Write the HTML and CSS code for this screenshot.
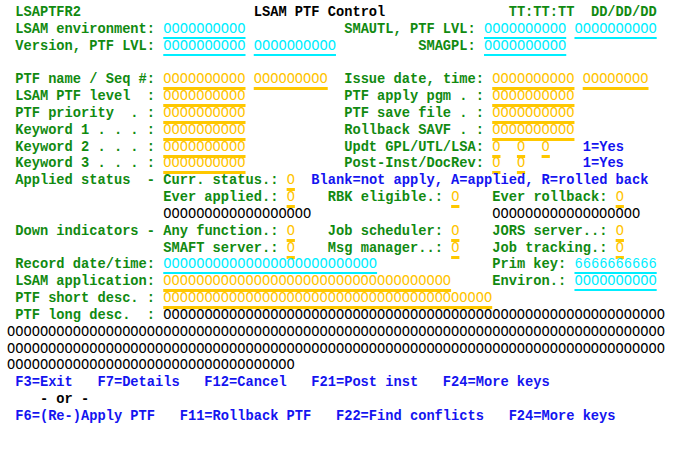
FILE: index.html
```html
<!DOCTYPE html>
<html>
<head>
<meta charset="utf-8">
<link rel="stylesheet" href="styles.css">
</head>
<body>
<div class="screen">
<div class="r"> <span class="g">LSAPTFR2</span>                     <span class="k">LSAM PTF Control</span>               <span class="g">TT:TT:TT</span>  <span class="g">DD/DD/DD</span></div>
<div class="r"> <span class="g">LSAM environment:</span> <span class="c">OOOOOOOOOO</span>            <span class="g">SMAUTL, PTF LVL:</span> <span class="c">OOOOOOOOOO</span> <span class="c">OOOOOOOOOO</span></div>
<div class="r"> <span class="g">Version, PTF LVL:</span> <span class="c">OOOOOOOOOO</span> <span class="c">OOOOOOOOOO</span>          <span class="g">SMAGPL:</span> <span class="c">OOOOOOOOOO</span></div>
<div class="r"> </div>
<div class="r"> <span class="g">PTF name / Seq #:</span> <span class="y">OOOOOOOOOO</span> <span class="y">OOOOOOOOO</span>  <span class="g">Issue date, time:</span> <span class="y">OOOOOOOOOO</span> <span class="y">OOOOOOOO</span></div>
<div class="r"> <span class="g">LSAM PTF level  :</span> <span class="y">OOOOOOOOOO</span>            <span class="g">PTF apply pgm . :</span> <span class="y">OOOOOOOOOO</span></div>
<div class="r"> <span class="g">PTF priority  . :</span> <span class="y">OOOOOOOOOO</span>            <span class="g">PTF save file . :</span> <span class="y">OOOOOOOOOO</span></div>
<div class="r"> <span class="g">Keyword 1 . . . :</span> <span class="y">OOOOOOOOOO</span>            <span class="g">Rollback SAVF . :</span> <span class="y">OOOOOOOOOO</span></div>
<div class="r"> <span class="g">Keyword 2 . . . :</span> <span class="y">OOOOOOOOOO</span>            <span class="g">Updt GPL/UTL/LSA:</span> <span class="y">O</span>  <span class="y">O</span>  <span class="y">O</span>    <span class="b">1=Yes</span></div>
<div class="r"> <span class="g">Keyword 3 . . . :</span> <span class="y">OOOOOOOOOO</span>            <span class="g">Post-Inst/DocRev:</span> <span class="y">O</span>  <span class="y">O</span>       <span class="b">1=Yes</span></div>
<div class="r"> <span class="g">Applied status  -</span> <span class="g">Curr. status.:</span> <span class="y">O</span>  <span class="b">Blank=not apply, A=applied, R=rolled back</span></div>
<div class="r">                   <span class="g">Ever applied.:</span> <span class="y">O</span>    <span class="g">RBK eligible.:</span> <span class="y">O</span>    <span class="g">Ever rollback:</span> <span class="y">O</span></div>
<div class="r">                   <span class="o">OOOOOOOOOOOOOOOOOO</span>                      <span class="o">OOOOOOOOOOOOOOOOOO</span></div>
<div class="r"> <span class="g">Down indicators -</span> <span class="g">Any function.:</span> <span class="y">O</span>    <span class="g">Job scheduler:</span> <span class="y">O</span>    <span class="g">JORS server..:</span> <span class="y">O</span></div>
<div class="r">                   <span class="g">SMAFT server.:</span> <span class="y">O</span>    <span class="g">Msg manager..:</span> <span class="y">O</span>    <span class="g">Job tracking.:</span> <span class="y">O</span></div>
<div class="r"> <span class="g">Record date/time:</span> <span class="c">OOOOOOOOOOOOOOOOOOOOOOOOOO</span>              <span class="g">Prim key:</span> <span class="c">6666666666</span></div>
<div class="r"> <span class="g">LSAM application:</span> <span class="y">OOOOOOOOOOOOOOOOOOOOOOOOOOOOOOOOOOO</span>     <span class="g">Environ.:</span> <span class="c">OOOOOOOOOO</span></div>
<div class="r"> <span class="g">PTF short desc. :</span> <span class="y">OOOOOOOOOOOOOOOOOOOOOOOOOOOOOOOOOOOOOOOO</span></div>
<div class="r"> <span class="g">PTF long desc.  :</span> <span class="o">OOOOOOOOOOOOOOOOOOOOOOOOOOOOOOOOOOOOOOOOOOOOOOOOOOOOOOOOOOOOO</span></div>
<div class="r"><span class="o">OOOOOOOOOOOOOOOOOOOOOOOOOOOOOOOOOOOOOOOOOOOOOOOOOOOOOOOOOOOOOOOOOOOOOOOOOOOOOOOO</span></div>
<div class="r"><span class="o">OOOOOOOOOOOOOOOOOOOOOOOOOOOOOOOOOOOOOOOOOOOOOOOOOOOOOOOOOOOOOOOOOOOOOOOOOOOOOOOO</span></div>
<div class="r"><span class="o">OOOOOOOOOOOOOOOOOOOOOOOOOOOOOOOOOOO</span></div>
<div class="r"> <span class="b">F3=Exit   F7=Details   F12=Cancel   F21=Post inst   F24=More keys</span></div>
<div class="r">    <span class="k">- or -</span></div>
<div class="r"> <span class="b">F6=(Re-)Apply PTF   F11=Rollback PTF   F22=Find conflicts   F24=More keys</span></div>
</div>
</body>
</html>
```

FILE: styles.css
```css
html, body {
  margin: 0;
  padding: 0;
  background: #ffffff;
}
.screen {
  padding: 5px 0 0 7px;
  font-family: "Liberation Mono", "Courier New", monospace;
  font-weight: bold;
  font-size: 13.71px;
  color: #000000;
}
.r {
  white-space: pre;
  height: 16.83px;
  line-height: 16.83px;
}
.g { color: #118a11; }
.k { color: #000000; }
.o { color: #000000; font-weight: normal; }
.b { color: #1414f0; }
.c {
  color: #00eeff;
  font-weight: normal;
  text-decoration: underline;
  text-decoration-color: #00eeff;
  text-decoration-thickness: 2px;
  text-underline-offset: 4px;
}
.y {
  color: #ffc400;
  font-weight: normal;
  text-decoration: underline;
  text-decoration-color: #ffc800;
  text-decoration-thickness: 3px;
  text-underline-offset: 4px;
}
```
